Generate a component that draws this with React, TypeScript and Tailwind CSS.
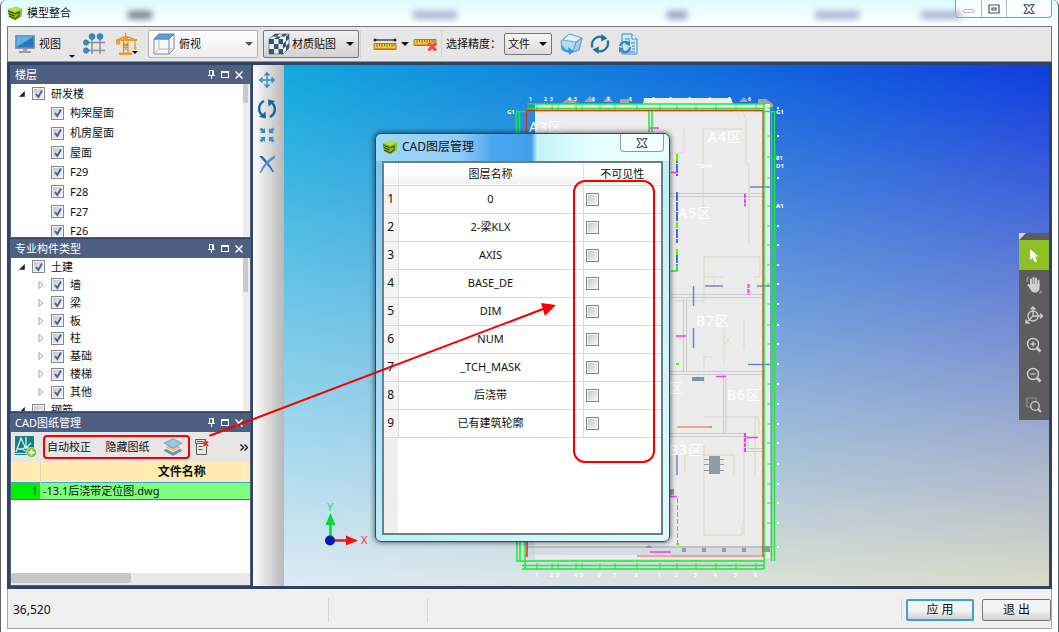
import { useState } from "react";
import type { ReactNode } from "react";

const FLOORS = ["构架屋面", "机房屋面", "屋面", "F29", "F28", "F27", "F26"];
const COMPONENT_TYPES = ["墙", "梁", "板", "柱", "基础", "楼梯", "其他"];
const LAYERS = [
  "0",
  "2-梁KLX",
  "AXIS",
  "BASE_DE",
  "DIM",
  "NUM",
  "_TCH_MASK",
  "后浇带",
  "已有建筑轮廓",
];

function Logo() {
  return (
    <svg viewBox="0 0 16 16" className="size-4 shrink-0" aria-hidden="true">
      <path d="M.5 4 9 1.500l6.500 2L8 7z" fill="#b4dc4c" />
      <path d="M.5 4 8 7v8.500L2 12z" fill="#86b52a" />
      <path d="M15.500 3.500 8 7v8.500l6.500-4z" fill="#8cc21f" />
      <path
        d="m1 6 6.500 2.500M1.500 8.500l6 2.500M2 11l5.500 2.500M8 9l4-2v4l-4 3"
        fill="none"
        stroke="#33520f"
        strokeWidth="1.100"
      />
    </svg>
  );
}

function Caret({ className = "" }: { className?: string }) {
  return (
    <svg viewBox="0 0 8 4" className={`h-1 w-2 shrink-0 ${className}`} aria-hidden="true">
      <path d="M0 0h8L4 4z" fill="currentColor" />
    </svg>
  );
}

function GlassCross() {
  return (
    <svg viewBox="0 0 12 10" className="h-[10px] w-3" aria-hidden="true">
      <path
        d="M1 .5h3.500L6 2.500 7.500.5H11L8 5l3 4.500H7.500L6 7.500 4.500 9.500H1L4 5z"
        fill="#fff"
        stroke="#4b4f63"
        strokeWidth="1.200"
        strokeLinejoin="round"
      />
    </svg>
  );
}

function CheckBox({ label, checked = false }: { label: string; checked?: boolean }) {
  const [on, setOn] = useState(checked);
  return (
    <span className="grid size-[13px] shrink-0 place-items-center">
      <input
        type="checkbox"
        aria-label={label}
        checked={on}
        onChange={() => setOn(!on)}
        className="col-start-1 row-start-1 size-[13px] appearance-none border border-[#85878a] bg-linear-to-br from-[#bfc3c9] to-[#fafafa] outline-1 -outline-offset-2 outline-[#f4f4f4]"
      />
      {on && (
        <svg
          viewBox="0 0 10 10"
          className="pointer-events-none col-start-1 row-start-1 size-[10px]"
          aria-hidden="true"
        >
          <path d="M2 5 4.300 8 8 1.500" fill="none" stroke="#4a5fa5" strokeWidth="1.900" />
        </svg>
      )}
    </span>
  );
}

function Expander({ open = false }: { open?: boolean }) {
  return (
    <svg viewBox="0 0 8 8" className="size-2 shrink-0" aria-hidden="true">
      {open ? (
        <path d="M6.500 1.500v5h-5z" fill="#222" stroke="#222" strokeWidth=".6" />
      ) : (
        <path d="M2 .5 6 4 2 7.500z" fill="#fff" stroke="#a0a0a0" />
      )}
    </svg>
  );
}

function Panel({ title, children }: { title: string; children: ReactNode }) {
  return (
    <section className="flex min-h-0 flex-1 flex-col border border-t-0 border-[#4d6082] bg-white">
      <header className="flex h-[19px] shrink-0 items-center bg-[#4d6082] pr-1.5 pl-1 text-white">
        <h2 className="flex-1">{title}</h2>
        <div className="flex gap-1">
          <button type="button" aria-label="固定" className="grid size-[10px] place-items-center">
            <svg viewBox="0 0 10 10" className="size-[10px]" aria-hidden="true">
              <path d="M3.500 5.500v-5h4v5M2 5.500h7M5.500 5.500V9" fill="none" stroke="#fff" />
              <path d="M6.500 1v4" stroke="#fff" />
            </svg>
          </button>
          <button type="button" aria-label="最大化" className="grid size-[10px] place-items-center">
            <span className="h-[7px] w-2 border border-t-2 border-white" />
          </button>
          <button type="button" aria-label="关闭" className="grid size-[10px] place-items-center">
            <svg viewBox="0 0 8 8" className="size-2" aria-hidden="true">
              <path d="m.5.500 7 7m0-7-7 7" stroke="#fff" strokeWidth="1.500" />
            </svg>
          </button>
        </div>
      </header>
      {children}
    </section>
  );
}

function MonitorIcon() {
  return (
    <svg viewBox="0 0 20 20" className="size-5" aria-hidden="true">
      <rect x="0" y="1" width="20" height="14" rx="1" fill="#8f9499" />
      <rect x="1.500" y="2.500" width="17" height="11" fill="#2379bf" />
      <path d="M1.500 2.500h17L1.500 13z" fill="#58b4ea" />
      <path d="M8 15h4v2H8z" fill="#a6aaae" />
      <path d="M4 17h12v2H4z" fill="#9a9ea2" />
    </svg>
  );
}

function AxisGridIcon() {
  return (
    <svg viewBox="0 0 22 22" className="size-[22px]" aria-hidden="true">
      <path d="M9 4v17M17 4v17M3 9.500h19M3 17.500h19" stroke="#8b9196" strokeWidth="1.500" />
      <g fill="#2f8fc4" stroke="#236f9c" strokeWidth=".5">
        <circle cx="9" cy="3.500" r="3" />
        <circle cx="17" cy="3.500" r="3" />
        <circle cx="3" cy="9.500" r="2.700" />
        <circle cx="3" cy="17.500" r="2.700" />
      </g>
    </svg>
  );
}

function CraneIcon() {
  return (
    <svg viewBox="0 0 23 22" className="h-[22px] w-[23px]" aria-hidden="true">
      <path
        d="M1 7.500 10.500 3 22 7.500M10.500 0v4M20 7v8M8.500 8v12M13 8v12M8.500 10l4.500 3.500-4.500 3.500M13 10l-4.500 3.500L13 17"
        fill="none"
        stroke="#e0901f"
        strokeWidth="1.200"
      />
      <path d="M1 6h21v2H1zM1 8h4v3.500H1zM4 19.500h13V22H4zM8 3.500h5V8H8zM19 14h2.500v2H19z" fill="#ee9b1e" />
    </svg>
  );
}

function ViewCubeIcon() {
  return (
    <svg viewBox="0 0 22 22" className="size-[22px] shrink-0" aria-hidden="true">
      <path d="M1 6h15v15H1zM16 6l5-5v15l-5 5" fill="#f5f6f8" stroke="#7c8792" />
      <path d="M1 6 6 1h15l-5 5z" fill="#4ba4ec" stroke="#6b7f94" />
      <path d="M6 6v10h10M6 16l-5 5M16 16l5 0" fill="none" stroke="#b5bcc4" />
    </svg>
  );
}

function CheckerCubeIcon() {
  return (
    <svg viewBox="0 0 22 22" className="size-[22px] shrink-0" aria-hidden="true">
      <path d="M1 6 7 1h14v14l-6 6H1z" fill="#e9eef2" stroke="#51697d" strokeWidth=".7" />
      <g fill="#3c5468">
        <path d="M1 6h5v5H1zM10.500 6H15v5h-4.500zM6 11h4.500v5H6zM1 16h5v5H1zM10.500 16H15v5h-4.500z" />
        <path d="m7 1 4 0-2 2.500H4zM15 1h4l-2 2.500h-4zM9 3.500h4L10.500 6H6z" />
        <path d="m15 11 3-3v5l-3 3zM18 3.500 21 1v5l-3 2.500zM18 13l3-3v5l-3 3.500z" />
      </g>
    </svg>
  );
}

function RulerIcon({ remove = false }: { remove?: boolean }) {
  return (
    <svg viewBox="0 0 24 16" className="h-4 w-6" aria-hidden="true">
      {!remove && (
        <>
          <path d="M2 4h20" stroke="#222" strokeWidth="1.200" />
          <circle cx="2" cy="4" r="1.500" fill="#222" />
          <circle cx="22" cy="4" r="1.500" fill="#222" />
        </>
      )}
      <g transform={remove ? "translate(0 -4)" : undefined}>
        <path d="M1 7.500h22v6H1z" fill="#f6c744" stroke="#b27d15" />
        <path
          d="M4 8v3M6.500 8v2M9 8v3M11.500 8v2M14 8v3M16.500 8v2M19 8v3M21 8v2"
          stroke="#7f5710"
          strokeWidth=".8"
        />
        <path d="M1 12.500h22" stroke="#d89a1e" />
      </g>
      {remove && <path d="m15.500 7 7.500 7.500m0-7.500-7.500 7.500" stroke="#f4464b" strokeWidth="3" />}
    </svg>
  );
}

function RefreshIcon() {
  return (
    <svg viewBox="0 0 20 20" className="size-5" aria-hidden="true">
      <path
        d="M2.500 13.500A8 8 0 0 1 13 3.300M17.500 6.500A8 8 0 0 1 7 16.700"
        fill="none"
        stroke="#1c7599"
        strokeWidth="2.300"
      />
      <path d="m11.500 0 6 4.500-6.500 3zM8.500 20l-6-4.500 6.500-3z" fill="#1c7599" />
    </svg>
  );
}

function RotateIcon() {
  return (
    <svg viewBox="0 0 20 20" className="size-5" aria-hidden="true">
      <path
        d="M7 2a8.500 8.500 0 0 0-2 14M13 18a8.500 8.500 0 0 0 2-14"
        fill="none"
        stroke="#116a99"
        strokeWidth="2.400"
      />
      <path d="m8.500 12.500.5 7-7-1.500zM11.500 7.500 11 .5l7 1.500z" fill="#116a99" />
    </svg>
  );
}

function BoxRefreshIcon() {
  return (
    <svg viewBox="0 0 23 22" className="h-[22px] w-[23px]" aria-hidden="true">
      <path d="M1 8 9 1l13 4-3 12-9 3-8-3z" fill="#b7daf4" stroke="#5c9cd3" strokeLinejoin="round" />
      <path d="m9 1 13 4-6 4L3 7z" fill="#e3f2fc" stroke="#6cabdb" strokeLinejoin="round" />
      <path d="m16 9 6-4-3 12-6 2z" fill="#9dcaee" stroke="#5c9cd3" strokeLinejoin="round" />
      <path d="M2 13c1 4 4 5 7 5" fill="none" stroke="#2f9fd4" strokeWidth="2.200" />
      <path d="m8 14 6 4-5 4z" fill="#2f9fd4" />
    </svg>
  );
}

function DocRefreshIcon() {
  return (
    <svg viewBox="0 0 20 22" className="h-[22px] w-5" aria-hidden="true">
      <path d="M4 1h10l5 5v15H4z" fill="#cfe7f8" stroke="#3c8dc0" />
      <path d="M14 1v5h5" fill="#fff" stroke="#3c8dc0" />
      <path d="M7 6h5M13 10h4M14 13h3M14 16h3M7 19h10" stroke="#3c8dc0" />
      <path d="M2 13a5 5 0 0 1 8-3M12 14a5 5 0 0 1-8 4" fill="none" stroke="#2b86c4" strokeWidth="2.200" />
      <path d="m12 7 0 6-5-2zM1 20v-6l5 2z" fill="#2b86c4" />
    </svg>
  );
}

function Toolbar() {
  return (
    <div className="flex h-9 shrink-0 items-center border border-b-[#8d939c] border-[#757b80] bg-[#e6e6e6] pl-[7px]">
      <button type="button" className="flex items-center gap-1">
        <MonitorIcon />
        <span>视图</span>
      </button>
      <Caret className="mt-6 ml-2 h-[3px] w-[6px]" />
      <button type="button" aria-label="轴网" className="ml-2">
        <AxisGridIcon />
      </button>
      <button type="button" aria-label="塔吊" className="ml-2.5 flex items-center">
        <CraneIcon />
        <Caret className="mt-4 -ml-1.5 h-[3px] w-[6px]" />
      </button>

      <label className="ml-2.5 flex h-7 w-[110px] items-center gap-1 rounded-xs border border-[#b0b0b0] bg-linear-to-b from-[#fdfdfd] to-[#eeeeee] px-1">
        <ViewCubeIcon />
        <select aria-label="视角" className="min-w-0 flex-1 appearance-none bg-transparent">
          <option>俯视</option>
          <option>仰视</option>
        </select>
        <Caret className="text-[#555]" />
      </label>
      <button
        type="button"
        className="ml-[5px] flex h-7 w-24 items-center rounded-xs border border-[#777] bg-linear-to-b from-[#f0f0f0] to-[#d2d2d2] px-1"
      >
        <CheckerCubeIcon />
        <span className="ml-0.5">材质贴图</span>
        <Caret className="ml-auto" />
      </button>
      <span className="mx-px h-7 border-l border-[#d3d3d3]" />

      <button type="button" className="ml-[11px] flex items-center gap-1" aria-label="测量">
        <RulerIcon />
        <Caret />
      </button>
      <button type="button" aria-label="清除测量" className="ml-1">
        <RulerIcon remove />
      </button>
      <span className="mx-1 h-7 border-l border-[#d3d3d3]" />

      <label htmlFor="precision">选择精度：</label>
      <span className="ml-[3px] flex h-[22px] w-12 items-center rounded-xs border border-[#777] bg-linear-to-b from-[#f4f4f4] to-[#dcdcdc] pr-1 pl-[3px]">
        <select id="precision" className="min-w-0 flex-1 appearance-none bg-transparent">
          <option>文件</option>
          <option>构件</option>
        </select>
        <Caret />
      </span>
      <button type="button" aria-label="更新模型" className="ml-2">
        <BoxRefreshIcon />
      </button>
      <button type="button" aria-label="刷新" className="ml-[7px]">
        <RefreshIcon />
      </button>
      <button type="button" aria-label="更新文档" className="ml-2">
        <DocRefreshIcon />
      </button>
    </div>
  );
}

function FloorPanel() {
  return (
    <Panel title="楼层">
      <div className="flex min-h-0 flex-1 overflow-hidden">
        <ul className="grid h-[157px] flex-1 auto-rows-fr">
          <li className="flex items-center gap-1.5 pl-[7px]">
            <Expander open />
            <CheckBox label="研发楼" checked />
            研发楼
          </li>
          {FLOORS.map((floor) => (
            <li key={floor} className="flex items-center gap-1.5 pl-10">
              <CheckBox label={floor} checked />
              {floor}
            </li>
          ))}
        </ul>
        <div className="w-[7px] bg-[#ececec]">
          <div className="h-[19px] w-[5px] bg-[#c9c9c9]" />
        </div>
      </div>
    </Panel>
  );
}

function ComponentPanel() {
  return (
    <Panel title="专业构件类型">
      <div className="flex min-h-0 flex-1 overflow-hidden">
        <ul className="grid h-[161px] flex-1 auto-rows-fr">
          <li className="flex items-center gap-1.5 pl-[7px]">
            <Expander open />
            <CheckBox label="土建" checked />
            土建
          </li>
          {COMPONENT_TYPES.map((type) => (
            <li key={type} className="flex items-center gap-1.5 pl-[26px]">
              <Expander />
              <CheckBox label={type} checked />
              {type}
            </li>
          ))}
          <li className="flex items-center gap-1.5 pl-[7px]">
            <Expander open />
            <CheckBox label="钢筋" />
            钢筋
          </li>
        </ul>
        <div className="w-[7px] bg-[#ececec]">
          <div className="h-[34px] w-[5px] bg-[#c9c9c9]" />
        </div>
      </div>
    </Panel>
  );
}

function DrawingPanel() {
  return (
    <Panel title="CAD图纸管理">
      <div className="flex h-[30px] shrink-0 items-center bg-[#e6e6e6] pl-1">
        <button type="button" aria-label="导入图纸">
          <svg viewBox="0 0 22 22" className="size-[22px]" aria-hidden="true">
            <path d="M0 0h19v19H0z" fill="#177f7c" />
            <path d="M1 16 6 2l5 11M11 1v12M11 12l5-5M3 13h6" fill="none" stroke="#d7efee" strokeWidth="1.300" />
            <path d="M9 11h4v4H9zM0 17.500h19" fill="none" stroke="#d7efee" />
            <circle cx="16.500" cy="16.500" r="5" fill="#7fc41c" stroke="#fff" strokeWidth=".6" />
            <path d="M16.500 13.500v6m-3-3h6" stroke="#fff" strokeWidth="1.800" />
          </svg>
        </button>
        <div className="ml-1.5 flex h-6 w-[147px] items-center justify-between rounded-sm border-2 border-[#f40000] pr-1.5 pl-0.5">
          <button type="button">自动校正</button>
          <button type="button">隐藏图纸</button>
          <button type="button" aria-label="图层管理">
            <svg viewBox="0 0 18 18" className="size-[18px]" aria-hidden="true">
              <path d="m0 12.500 9-4.500 9 4.500L9 17.500z" fill="#6d94bf" stroke="#4670a0" strokeWidth=".5" />
              <path d="M0 9 9 4.500 18 9l-9 5z" fill="#f6bd68" stroke="#fff" strokeWidth=".8" />
              <path d="M0 5.200 9 .5l9 4.700-9 5z" fill="#94c8ec" stroke="#4b86bb" strokeWidth=".6" />
            </svg>
          </button>
        </div>
        <button type="button" aria-label="删除图纸" className="ml-1">
          <svg viewBox="0 0 16 18" className="h-[18px] w-4" aria-hidden="true">
            <path d="M2.500 5.500v11h10v-8M1.500 1.500h10v4h-10zM4.500 8.500h4M4.500 11.500h4" fill="none" stroke="#5a5a5a" />
            <path d="M3 3.500h6" stroke="#5a5a5a" />
            <path d="m9.500 3.500 4.500 4.500m0-4.500L9.500 8" stroke="#e23b22" strokeWidth="2" />
          </svg>
        </button>
        <button type="button" aria-label="更多" className="mr-0.5 ml-auto">
          <svg viewBox="0 0 8 7" className="h-[7px] w-2" aria-hidden="true">
            <path d="m.5.500 3 3-3 3m4-6 3 3-3 3" fill="none" stroke="#111" strokeWidth="1.300" />
          </svg>
        </button>
      </div>
      <div className="min-h-0 flex-1 overflow-hidden">
        <table className="w-[312px] table-fixed border-collapse">
          <thead>
            <tr className="h-5 border-b border-[#3ba0e6] bg-[#feecb1]">
              <th className="w-[29px] border-r border-[#d9d3bd]" />
              <th className="text-xs leading-4 font-bold">文件名称</th>
            </tr>
          </thead>
          <tbody>
            <tr className="h-[17px] border-b border-[#6e6e6e] bg-[#7dff7d]">
              <td className="bg-[#00f000] pr-0.5 text-right">1</td>
              <td className="pl-[3px]">-13.1后浇带定位图.dwg</td>
            </tr>
          </tbody>
        </table>
      </div>
      <div className="h-3 shrink-0 bg-[#e9e9e9]">
        <div className="h-[10px] w-1/2 rounded-xs bg-[#c6c6c6]" />
      </div>
    </Panel>
  );
}

function ViewStrip() {
  return (
    <div className="flex w-[31px] shrink-0 flex-col items-center gap-3 bg-linear-to-r from-[#fdfdfd] to-[#b9b9b9] pt-[7px] pr-[3px]">
      <button type="button" aria-label="平移">
        <svg viewBox="0 0 16 16" className="size-4" aria-hidden="true">
          <path d="M8 2v12M2 8h12" stroke="#2a8fc8" strokeWidth="1.400" />
          <path
            d="M5.500 3.500 8 1l2.500 2.500M5.500 12.500 8 15l2.500-2.500M3.500 5.500 1 8l2.500 2.500M12.500 5.500 15 8l-2.500 2.500"
            fill="none"
            stroke="#2a8fc8"
            strokeWidth="1.600"
          />
        </svg>
      </button>
      <button type="button" aria-label="旋转" className="-mt-px">
        <RotateIcon />
      </button>
      <button type="button" aria-label="缩放至适合" className="-mt-1">
        <svg viewBox="0 0 16 16" className="size-4" aria-hidden="true">
          <path
            d="M6 1v5H1l1.500-1.500L.5 2.500l2-2 2 2zM10 1v5h5l-1.500-1.500 2-2-2-2-2 2zM6 15v-5H1l1.500 1.500-2 2 2 2 2-2zM10 15v-5h5l-1.500 1.500 2 2-2 2-2-2z"
            fill="#318fc4"
          />
        </svg>
      </button>
      <button type="button" aria-label="取消">
        <svg viewBox="0 0 16 18" className="h-[18px] w-4" aria-hidden="true">
          <path d="M0 1h3.500c4 4 8.500 10 11.500 16h-1.500C10 12 5 6 0 1z" fill="#2d6fb4" />
          <path d="M16 0v3C10 7 5 12 2 18H.5C3 11 9 4 16 0z" fill="#5a8fc8" />
        </svg>
      </button>
    </div>
  );
}

const TOP_TICKS = [537, 552, 558, 576, 582, 600, 615, 637, 660, 677, 696, 716, 736, 756];
const RIGHT_TICKS = [
  108, 136, 157, 178, 206, 226, 245, 265, 284, 304, 325, 344, 364, 384, 404, 424, 443, 464, 484, 503,
  523, 547,
];

function BuildingPlan() {
  return (
    <svg viewBox="284 65 765 521" className="absolute size-full" aria-label="建筑平面图">
      <g fill="#a0a4a8">
        <path d="m562 103 8-6 8 6zM584 102l6-6 5 6zM603 102l5-6 5 6zM620 99h9v4h-9zM739 102l5-5 4 5zM676 99h7v4h-7zM758 99h8l7 5v3h-15z" />
      </g>
      <path d="M644 98h87l2 6h-90z" fill="#e9edf0" />
      <path d="M535 104h235v455H535z" fill="#ececec" />

      {/* 内墙 */}
      <g stroke="#cacaca" fill="none">
        <path d="M670 193.500h95M670 196.500h95M660 294.500h105M660 297.500h105M683.500 297v74M686.500 297v74M670 371.500h95M670 374.500h95" />
        <path d="M723.500 374v60M726 374v60M664 433.500h80v18h20M664 436.500h84v12h16" />
        <path d="M527 547h240" stroke="#8f979e" />
      </g>
      <g stroke="#ddd6c4" fill="none">
        <path d="M742 111l4 8v45h3v82M684 129v24H665M703 129v82M703 129h40M704 257v44h-30M704 257h56v20h-6M704 277h19M714 277v9M757 289v-8M724 320v45M744 320v30" />
        <path d="M704 356v30M704 417h55v18M704 445v90h38v-10M744 445v90M684 455h50v20M685 456v17M755 415v60M704 357h8M724 345l7-9" />
      </g>
      <g fill="#959a9f">
        <path d="M709 456h11v18h-11zM704 459h20v1h-20zM704 464h20v1h-20zM704 470h20v1h-20z" />
      </g>
      <path d="M527 548h235v7H527z" fill="#ccd4da" fillOpacity=".7" />
      <g fill="#959a9f">
        <path d="M682 548h4v4h-4zM702 548h4v4h-4zM722 548h4v4h-4zM742 548h4v4h-4zM762 546h8v6h-8zM645 548l4-3 4 3zM670 489h4v6h-4z" />
      </g>
      <path d="M692 377h12v4h-12z" fill="#7792dc" />
      <path d="M695 377h5v4h-5z" fill="#8a8f99" />

      {/* 梁 */}
      <g strokeWidth="2" fill="none">
        <path
          d="M677 154v22M677 192v30M677 229v14M677 254v12"
          stroke="#3d6fd8"
          strokeDasharray="9 1"
        />
        <path
          d="M750 187h20M705 286h18M757 286h13M748 364.500h22M693.500 286v20M693.500 328v20M677 455v20"
          stroke="#6584d0"
          strokeWidth="1.500"
        />
        <path d="M677.500 498v45" stroke="#8b93c8" strokeWidth="1" strokeDasharray="5 2" />
        <path d="M677 154v7M677 222v6M677 249v6M677 265v6M676 364h3M709 427h3M676 544h3" stroke="#5ef000" />
        <path
          d="M650 128h9M671 172.500h6M676 336h10M716 376.500h10M746 437.500h12M670 496.500h7M650 552h21"
          stroke="#f03cf0"
          strokeWidth="1.500"
        />
        <path d="M745 194v12M748.500 284v11M745 433v20" stroke="#f03cf0" strokeDasharray="4 1" />
        <path d="M677 427h32M637 556h128" stroke="#f08a80" strokeWidth="1.500" />
      </g>

      {/* 轴线 */}
      <g fill="none" stroke="#1ee838" strokeWidth="1.500">
        <path d="M527 104h237M527 108.500h237" />
        <path d="M516 111.500h10M516.500 111v52M519.500 111v50M764 103v466M774.500 111v450M771.500 111v450M764 111.500h11" />
        <path d="M649 110v22M652 110v22M517 540v21M520 540v21M525 540v29M516 561h248M522 565.500h242M522 569h242" />
        <path d="M671 271h6v-6" />
      </g>
      <g stroke="#1ee838">
        {TOP_TICKS.map((x) => (
          <path key={x} d={`M${x} 104v7M${x} 563v7`} />
        ))}
        {RIGHT_TICKS.map((y) => (
          <path key={y} d={`M767 ${y}h6`} />
        ))}
      </g>
      <path d="M526.500 132V110.500H763" fill="none" stroke="#e0301c" strokeWidth="1.500" />
      <path d="M527 540v17" stroke="#e0301c" strokeWidth="1.500" />
      <path d="M763 111v446" stroke="#b8693c" strokeWidth="1.500" />
      <g fill="#fff" fontSize="5" fontWeight="700">
        {TOP_TICKS.map((x, i) => (
          <text key={x} x={x - 8} y="101">
            {(i % 8) + 1}
          </text>
        ))}
        {RIGHT_TICKS.map((y) => (
          <path key={y} d={`M777 ${y - 1}h2v2h-2z`} />
        ))}
        <text x="507" y="114" fontSize="6">G1</text>
        <text x="776" y="114" fontSize="6">G1</text>
        <text x="776" y="160" fontSize="6">E1</text>
        <text x="776" y="168" fontSize="6">D1</text>
        <text x="776" y="208" fontSize="6">A1</text>
        <text x="697" y="168" fontSize="6">TB4A</text>
        {TOP_TICKS.map((x, i) => (
          <text key={x} x={x - 2} y="577">
            {(i % 8) + 1}
          </text>
        ))}
      </g>

      {/* 分区名称 */}
      <g fill="#fff" fontSize="14" fontWeight="400" letterSpacing="1">
        <text x="529" y="132">A3区</text>
        <text x="708" y="142">A4区</text>
        <text x="678" y="218">A5区</text>
        <text x="696" y="326">B7区</text>
        <text x="727" y="400">B6区</text>
        <text x="650" y="393">B5区</text>
        <text x="669" y="455">B3区</text>
      </g>

      {/* 坐标轴 */}
      <path d="M330.500 540V525" stroke="#00d93a" strokeWidth="2.500" />
      <path d="m325.500 525 5-12 5 12z" fill="#00d93a" />
      <path d="M330 540.500h18" stroke="#f01414" strokeWidth="2.500" />
      <path d="m346 535.500 12 5-12 5z" fill="#f01414" />
      <circle cx="330" cy="540.500" r="5" fill="#0b17b5" />
      <text x="327" y="511" fontSize="11" fill="#21e64b">Y</text>
      <text x="361" y="544" fontSize="11" fill="#f03030">X</text>
    </svg>
  );
}

function NavigationPalette() {
  const cell = "grid h-[30px] w-full place-items-center";
  return (
    <div className="absolute top-[168px] right-0 w-[30px] bg-[#5d5d5d] text-[#cfcfcf]">
      <svg viewBox="0 0 7 7" className="size-[7px]" aria-hidden="true">
        <path d="M0 0h7L0 7z" fill="#d4d9e4" />
      </svg>
      <button type="button" aria-label="选择" className={`${cell} bg-[#8ebf25]`}>
        <svg viewBox="0 0 10 15" className="h-[15px] w-[10px]" aria-hidden="true">
          <path d="M1 1v11l2.500-2.500L5.500 14 8 13 6 8.500h3.500z" fill="#fff" />
        </svg>
      </button>
      <button type="button" aria-label="拖动" className={cell}>
        <svg viewBox="0 0 18 18" className="size-[18px]" aria-hidden="true">
          <path
            d="M6 9V3.500M8.500 8V2M11 8V2.500M13.500 9V4.500M6 12 3.500 9"
            stroke="currentColor"
            strokeWidth="2"
            strokeLinecap="round"
          />
          <path d="M5 8h9.500v4c0 3-2 4.500-4.500 4.500S6 15 4.500 12L5 9z" fill="currentColor" />
          <path d="M2 6V2.500L4 1M14 17h2v-2.500" fill="none" stroke="currentColor" strokeWidth=".7" />
        </svg>
      </button>
      <button type="button" aria-label="动态观察" className={cell}>
        <svg viewBox="0 0 20 20" className="size-5" aria-hidden="true">
          <g fill="none" stroke="currentColor" strokeWidth="1.300">
            <circle cx="9" cy="11" r="5" />
            <path d="M9 11V2M9 11h9M9 11l-7 7M6.500 4.500 9 2l2.500 2.500M16 8.500l2.500 2.500-2.500 2.500M2 14.500V18h3.500" />
          </g>
        </svg>
      </button>
      <button type="button" aria-label="放大" className={cell}>
        <svg viewBox="0 0 16 16" className="size-4" aria-hidden="true">
          <circle cx="7" cy="7" r="5.500" fill="none" stroke="currentColor" strokeWidth="1.400" />
          <path d="M7 4.500v5M4.500 7h5" stroke="currentColor" strokeWidth="1.300" />
          <path d="m11 11 3.500 3.500" stroke="currentColor" strokeWidth="2.600" />
        </svg>
      </button>
      <button type="button" aria-label="缩小" className={cell}>
        <svg viewBox="0 0 16 16" className="size-4" aria-hidden="true">
          <circle cx="7" cy="7" r="5.500" fill="none" stroke="currentColor" strokeWidth="1.400" />
          <path d="M4.500 7h5" stroke="currentColor" strokeWidth="1.300" />
          <path d="m11 11 3.500 3.500" stroke="currentColor" strokeWidth="2.600" />
        </svg>
      </button>
      <button type="button" aria-label="窗口缩放" className={cell}>
        <svg viewBox="0 0 16 16" className="size-4" aria-hidden="true">
          <path d="M4 10H1V1h9v3" fill="none" stroke="#909090" strokeWidth="1.200" />
          <circle cx="9" cy="9" r="4.300" fill="none" stroke="currentColor" strokeWidth="1.300" />
          <path d="m12 12 3 3" stroke="currentColor" strokeWidth="2" />
        </svg>
      </button>
    </div>
  );
}

function LayerDialog() {
  return (
    <div
      role="dialog"
      aria-label="CAD图层管理"
      className="absolute top-[133px] left-[374px] flex h-[409px] w-[295px] flex-col rounded-md border border-[#34485a] bg-linear-to-br from-[#74c1f5] via-[#b9effb] to-[#dffcff] px-[6px] pb-[6px] shadow-[0_0_5px_1px_rgba(0,0,0,0.5)]"
    >
      <div className="-mx-[6px] flex h-[27px] shrink-0 items-start justify-between rounded-t-md bg-[linear-gradient(90deg,#9ed8fa_0%,#92cdf8_28%,#4ba7ee_40%,#419fea_53%,#c2f4f7_55%,#e6ffff_75%,#e9feff_100%)] pr-[5px] pl-1.5">
        <div className="flex h-[26px] items-center gap-1 text-xs">
          <Logo />
          <h2>CAD图层管理</h2>
        </div>
        <button
          type="button"
          aria-label="关闭"
          className="grid h-[18px] w-11 place-items-center rounded-b-sm border border-t-0 border-[#8b9ba3] bg-white/50"
        >
          <GlassCross />
        </button>
      </div>
      <div className="relative flex min-h-0 flex-1 flex-col border-2 border-[#6d7d85] bg-white">
        <table className="w-full table-fixed border-collapse">
          <thead>
            <tr className="h-[22px] border-b border-[#d5d5d5] bg-linear-to-b from-white from-40% to-[#f0f1f3]">
              <th className="w-[14px] border-r border-[#e6e6e6]" />
              <th className="border-r border-[#e0e0e0] font-normal">图层名称</th>
              <th className="w-[78px] font-normal">不可见性</th>
            </tr>
          </thead>
          <tbody>
            {LAYERS.map((layer, index) => (
              <tr key={layer} className="h-7 border-b border-[#d9d9d9]">
                <td className="border-r border-[#e0e0e0] bg-[#f4f4f5] text-center text-xs">{index + 1}</td>
                <td className="border-r border-[#d9d9d9] text-center">{layer}</td>
                <td className="pl-0.5">
                  <CheckBox label={`${layer} 不可见性`} />
                </td>
              </tr>
            ))}
          </tbody>
        </table>
        <div className="w-[14px] flex-1 bg-[#eeeeee]" />
        <div className="pointer-events-none absolute top-[17px] right-[6px] h-[283px] w-[82px] rounded-xl border-2 border-[#f40000]" />
      </div>
    </div>
  );
}

function TitleBar() {
  return (
    <header className="flex h-[26px] shrink-0 items-start justify-between">
      <div className="flex h-[26px] items-center gap-1">
        <Logo />
        <h1>模型整合</h1>
      </div>
      <div className="flex h-[18px] rounded-b-sm border border-t-0 border-[#8f999b] bg-white/70">
        <button type="button" aria-label="最小化" className="grid w-[26px] place-items-center border-r border-[#b5bcbe]">
          <span className="mt-1 h-1 w-3 rounded-xs border border-[#bcbcbc] bg-white" />
        </button>
        <button type="button" aria-label="最大化" className="grid w-[25px] place-items-center border-r border-[#b5bcbe]">
          <svg viewBox="0 0 12 10" className="h-[10px] w-3" aria-hidden="true">
            <path d="M1 1h10v8H1zM4 4h4v2H4z" fill="#fff" stroke="#4b4f63" strokeWidth="1.200" />
          </svg>
        </button>
        <button type="button" aria-label="关闭" className="grid w-11 place-items-center">
          <GlassCross />
        </button>
      </div>
    </header>
  );
}

function StatusBar() {
  return (
    <footer className="flex h-10 shrink-0 items-center border border-t-0 border-[#a5a5a5] bg-[#f0f0f0] pt-0.5 pl-[5px] text-xs">
      <span className="w-[315px]">36,520</span>
      <span className="h-6 w-[100px] border-x border-[#d6d6d6]" />
      <div className="ml-auto flex items-center gap-2 border-l border-[#d6d6d6] pl-1">
        <button
          type="button"
          className="h-[22px] w-[68px] rounded-xs border-2 border-[#3f9fd0] bg-linear-to-b from-[#f3f3f3] from-50% to-[#d2d2d2] leading-none"
        >
          应 用
        </button>
        <button
          type="button"
          className="h-[22px] w-[69px] rounded-xs border border-[#777] bg-linear-to-b from-[#f3f3f3] from-50% to-[#d2d2d2] leading-none"
        >
          退 出
        </button>
      </div>
    </footer>
  );
}

function App() {
  return (
    <div className="relative flex h-screen flex-col overflow-hidden rounded-t-md border-x border-[#5b6063] bg-linear-to-b from-[#dcfcfd] via-white via-4% to-white px-1.5 pb-[3px] font-['Noto_Sans','Noto_Sans_CJK_SC',sans-serif] text-[11px] leading-4 text-[#111]">
      {/* 透过标题栏看到的模糊内容 */}
      <div className="pointer-events-none absolute inset-x-0 top-[11px] h-2 blur-[3px]">
        <span className="absolute left-[12%] h-2 w-6 bg-[#6f8088]" />
        <span className="absolute left-[39%] h-2 w-11 bg-[#a3b3d2]" />
        <span className="absolute left-[63%] h-2 w-5 bg-[#8fa0c4]" />
        <span className="absolute left-[77%] h-2 w-11 bg-[#a3b3d2]" />
        <span className="absolute left-[87%] h-2 w-10 bg-[#a3b3d2]" />
      </div>
      <TitleBar />
      <Toolbar />
      <main className="flex min-h-0 flex-1 gap-0.5 border-3 border-[#2f4365] bg-[#2f4365]">
        <aside className="flex w-[241px] shrink-0 flex-col gap-px">
          <FloorPanel />
          <ComponentPanel />
          <DrawingPanel />
        </aside>
        <div className="flex min-w-0 flex-1">
          <ViewStrip />
          <div className="relative flex-1 bg-linear-to-r/srgb from-[#10a8dc] to-[#0f3ce0]">
            <div className="absolute inset-0 bg-linear-to-r/srgb from-[#deebf3] to-[#dadbc6] [mask-image:linear-gradient(transparent,black)]" />
            <BuildingPlan />
            <NavigationPalette />
          </div>
        </div>
      </main>
      <StatusBar />
      <LayerDialog />
      <svg viewBox="0 0 1059 632" className="pointer-events-none absolute inset-0 size-full" aria-hidden="true">
        <path d="M209 436 543 309" stroke="#f40000" strokeWidth="2" />
        <path d="m541 303 15 2-11 11z" fill="#f40000" />
      </svg>
    </div>
  );
}

export default App;
